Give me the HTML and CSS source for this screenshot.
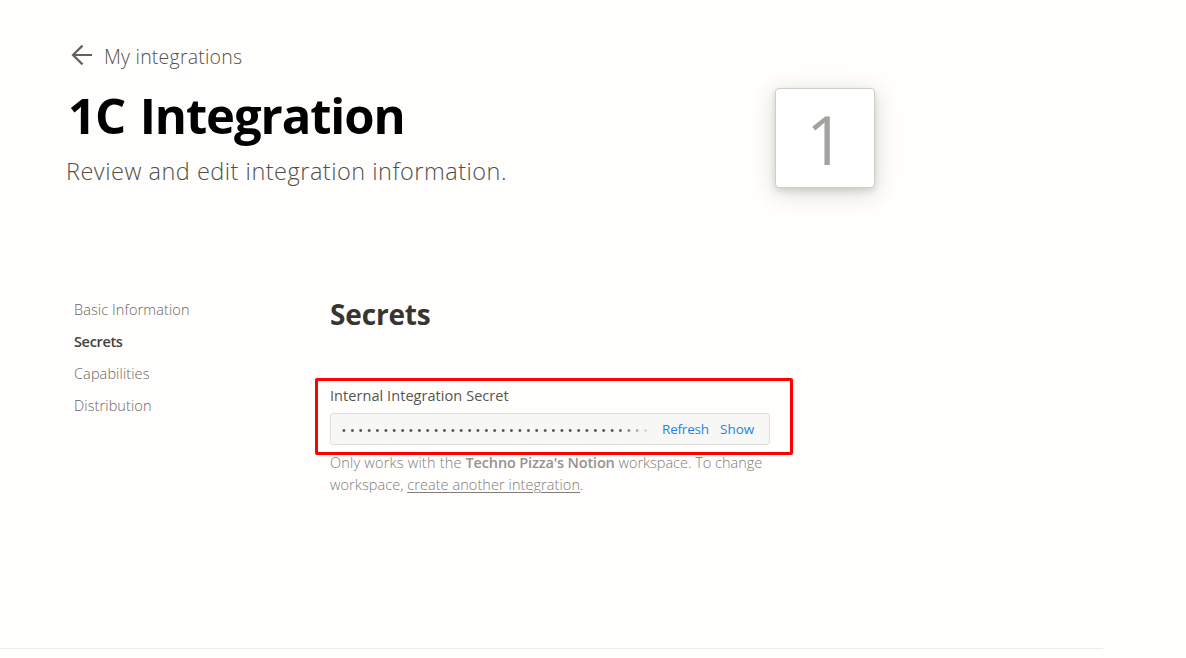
FILE: index.html
```html
<!DOCTYPE html>
<html lang="en">
<head>
<meta charset="utf-8">
<title>1C Integration</title>
<link rel="stylesheet" href="styles.css">
</head>
<body>
<div class="page">
  <header class="header">
    <div class="intro">
      <a class="back">
        <svg class="back-icon" width="22" height="22" viewBox="0 0 22 22" fill="none" stroke="currentColor" stroke-width="2.2"><path d="M21 11H2M11.5 1.6L2 11L11.5 20.4"/></svg>
        <span class="back-label">My integrations</span>
      </a>
      <h1 class="title"><span>1C Integration</span></h1>
      <p class="subtitle"><span>Review and edit integration information.</span></p>
    </div>
    <div class="logo"><span>1</span></div>
  </header>
  <div class="content">
    <nav class="nav">
      <a class="nav-link">Basic Information</a>
      <a class="active">Secrets</a>
      <a class="nav-link">Capabilities</a>
      <a class="nav-link">Distribution</a>
    </nav>
    <main class="main">
      <h2 class="section-title">Secrets</h2>
      <section class="secret">
        <div class="label">Internal Integration Secret</div>
        <div class="field">
          <span class="dots">•••••••••••••••••••••••••••••••••••••</span>
          <a class="refresh">Refresh</a>
          <a class="show">Show</a>
        </div>
        <div class="highlight"></div>
      </section>
      <p class="note"><span class="note-first">Only works with the </span><b>Techno Pizza's Notion</b> workspace. To change<br><span class="note-second">workspace, <u>create another integration</u>.</span></p>
    </main>
  </div>
  <footer class="divider"></footer>
</div>
</body>
</html>
```
FILE: styles.css
```css
* { box-sizing: border-box; }
body {
  margin: 0;
  background: #fffefc;
  font-family: "Open Sans", "Noto Sans", sans-serif;
  color: #37352f;
  overflow: hidden;
}
.page { height: 658px; display: flex; flex-direction: column; }
.header { display: flex; height: 296px; padding: 44px 0 0 66px; }
.intro { width: 709px; }
.back { display: flex; align-items: center; height: 22px; padding-left: 5px; color: #62615c; }
.back-label { margin: 3px 0 0 11px; font-size: 19.5px; line-height: 24px; font-weight: 300; letter-spacing: 0.22px; color: #53524d; white-space: nowrap; }
.title { margin: 17px 0 0 2px; font-size: 49px; line-height: 64px; font-weight: 700; color: #000; white-space: nowrap; letter-spacing: -1.1px; word-spacing: 3px; }
.subtitle { margin: 7px 0 0; font-size: 23.5px; line-height: 34px; font-weight: 300; color: #504f4a; white-space: nowrap; letter-spacing: 0.5px; }
.logo {
  width: 100px; height: 100px; margin-top: 44px;
  display: flex; align-items: center; justify-content: center;
  border: 1px solid #cfcec9; border-radius: 4px; background: #fff;
  box-shadow: 0 3px 6px rgba(60, 55, 30, .14), 0 5px 22px rgba(60, 55, 30, .19);
  font-size: 67px; line-height: 90px; font-weight: 400; color: #a3a29e;
}
.logo span { padding: 2px 0 0 1px; }
.content { display: flex; height: 352px; }
.nav { width: 330px; padding: 0 0 0 74px; display: flex; flex-direction: column; align-items: flex-start; font-size: 14.5px; font-weight: 300; line-height: 32px; letter-spacing: 0.1px; color: #686762; margin-top: -2px; white-space: nowrap; }
.nav .active { color: #44423d; font-weight: 600; letter-spacing: -0.35px; }
.main { width: 470px; }
.section-title { margin: 0; font-size: 28px; line-height: 37px; font-weight: 700; letter-spacing: -0.15px; }
.secret { position: relative; margin-top: 51px; }
.label { font-size: 14.5px; line-height: 22px; height: 29px; font-weight: 500; color: #55544f; white-space: nowrap; padding-top: 1px; letter-spacing: 0.06px; }
.field { display: flex; align-items: center; width: 440px; height: 32px; border: 1px solid #dfe0dc; border-radius: 3px; background: #f7f8f5; padding-left: 11px; }
.dots { width: 316px; padding-top: 1px; white-space: nowrap; font-family: "Liberation Sans", sans-serif; font-size: 11px; line-height: 14px; letter-spacing: 4.53px; color: #55544f; -webkit-mask-image: linear-gradient(to right, #000 275px, transparent 312px); mask-image: linear-gradient(to right, #000 275px, transparent 312px); }
.refresh, .show { font-size: 13.5px; line-height: 20px; color: #2383e2; white-space: nowrap; }
.refresh { width: 46px; margin-left: 4px; letter-spacing: -0.2px; }
.show { margin-left: 12px; }
.highlight { position: absolute; left: -15px; top: -6px; width: 478px; height: 77px; border: 3px solid #f00; border-radius: 2px; }
.note { margin: 7px 0 0; font-size: 14.5px; line-height: 22px; font-weight: 300; color: #7e7d79; white-space: nowrap; }
.note-first { letter-spacing: 0.2px; }
.note-second { letter-spacing: 0.07px; }
.note b { font-weight: 600; letter-spacing: -0.16px; color: #949390; }
.note u { text-underline-offset: 2px; }
.divider { width: 1103px; height: 1px; background: #ebebe9; }
```
